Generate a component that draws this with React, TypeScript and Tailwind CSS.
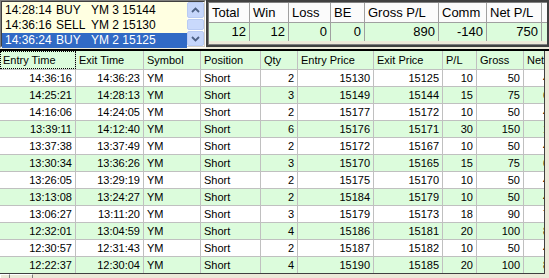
import React from "react";

const rows = [
  ["14:36:16", "14:36:23", "YM", "Short", "2", "15130", "15125", "10", "50", "42"],
  ["14:25:21", "14:28:13", "YM", "Short", "3", "15149", "15144", "15", "75", "63"],
  ["14:16:06", "14:24:05", "YM", "Short", "2", "15177", "15172", "10", "50", "42"],
  ["13:39:11", "14:12:40", "YM", "Short", "6", "15176", "15171", "30", "150", "126"],
  ["13:37:38", "13:37:49", "YM", "Short", "2", "15172", "15167", "10", "50", "42"],
  ["13:30:34", "13:36:26", "YM", "Short", "3", "15170", "15165", "15", "75", "63"],
  ["13:26:05", "13:29:19", "YM", "Short", "2", "15175", "15170", "10", "50", "42"],
  ["13:13:08", "13:24:27", "YM", "Short", "2", "15184", "15179", "10", "50", "42"],
  ["13:06:27", "13:11:20", "YM", "Short", "3", "15179", "15173", "18", "90", "78"],
  ["12:32:01", "13:04:59", "YM", "Short", "4", "15186", "15181", "20", "100", "84"],
  ["12:30:57", "12:31:43", "YM", "Short", "2", "15187", "15182", "10", "50", "42"],
  ["12:22:37", "12:30:04", "YM", "Short", "4", "15190", "15185", "20", "100", "84"],
];

const headers = ["Entry Time", "Exit Time", "Symbol", "Position", "Qty", "Entry Price", "Exit Price", "P/L", "Gross", "Net"];
const widths = [76, 68, 57, 60, 37, 76, 69, 34, 47, 60];
const rightAlign = [true, true, false, false, true, true, true, true, true, false];

const summaryHead = ["Total", "Win", "Loss", "BE", "Gross P/L", "Comm", "Net P/L"];
const summaryVals = ["12", "12", "0", "0", "890", "-140", "750"];
const summaryW = [41, 39, 42, 34, 74, 48, 55];

const listItems = [
  ["14:28:14", "BUY", "YM 3 15144"],
  ["14:36:16", "SELL", "YM 2 15130"],
  ["14:36:24", "BUY", "YM 2 15125"],
];

function Chevron({ up }: { up: boolean }) {
  return (
    <svg width="9" height="6" viewBox="0 0 9 6">
      <path
        d={up ? "M1 5 L4.5 1.5 L8 5" : "M1 1 L4.5 4.5 L8 1"}
        fill="none"
        stroke="#4d6185"
        strokeWidth="1.8"
      />
    </svg>
  );
}

export default function App() {
  return (
    <div className="w-[549px] h-[278px] bg-[#ece9d8] overflow-hidden font-['Liberation_Sans',Arial,sans-serif] text-black">
      {/* top area */}
      <div className="flex h-[49px]">
        {/* listbox */}
        <div className="w-[206px] h-[48px] border border-t-[#808080] border-l-[#808080] border-b-white border-r-white">
          <div className="w-full h-full border border-t-[#404040] border-l-[#404040] border-b-[#d4d0c8] border-r-[#d4d0c8] bg-[#ffffe1] flex">
            <div className="flex-1 pt-[1px] text-[12px] leading-[15px]">
              {listItems.map((it, i) => (
                <div
                  key={i}
                  className={
                    "flex h-[15px] pl-[3px] " +
                    (i === 2 ? "bg-[#316ac5] text-white" : "")
                  }
                >
                  <span className="w-[51px]">{it[0]}</span>
                  <span className="w-[35px]">{it[1]}</span>
                  <span>{it[2]}</span>
                </div>
              ))}
            </div>
            <div className="w-[17px] flex flex-col bg-[#fdfdfa]">
              <div className="h-[16px] rounded-[2px] border border-[#b9cbf3] bg-[#c6d6fb] flex items-center justify-center">
                <Chevron up />
              </div>
              <div className="flex-1 my-[1px] rounded-[2px] border border-[#b9cbf3] bg-[#c9d9fc]" />
              <div className="h-[15px] rounded-[2px] border border-[#b9cbf3] bg-[#c6d6fb] flex items-center justify-center">
                <Chevron up={false} />
              </div>
            </div>
          </div>
        </div>
        {/* summary grid */}
        <div className="w-[343px] h-[47px] border-2 border-[#404040] bg-[#ece9d8]">
          <div className="border border-[#808080] border-r-0 h-full">
            <div className="flex h-[20px] bg-[#fbfbfb] border-b border-[#a0a0a0] text-[13px] leading-[19px]">
              {summaryHead.map((h, i) => (
                <div
                  key={i}
                  style={{ width: summaryW[i] }}
                  className="border-r border-[#a0a0a0] pl-[3px] whitespace-nowrap overflow-hidden"
                >
                  {h}
                </div>
              ))}
            </div>
            <div className="flex h-[18px] bg-[#dcfcdc] text-[13px] leading-[18px]">
              {summaryVals.map((v, i) => (
                <div
                  key={i}
                  style={{ width: summaryW[i] }}
                  className="border-r border-[#a0a0a0] pr-[3px] text-right whitespace-nowrap"
                >
                  {v}
                </div>
              ))}
            </div>
          </div>
        </div>
      </div>
      {/* splitter line */}
      <div className="h-[2px] bg-black" />
      {/* main table */}
      <div className="flex">
        <div className="w-[545px] h-[223px] overflow-hidden bg-white border-r border-b border-[#404040]">
          <div className="flex h-[19px] bg-[#dcfcdc] border-b border-[#c0c0c0] text-[11px] leading-[18px] w-max">
            {headers.map((h, i) => (
              <div
                key={i}
                style={{ width: widths[i] }}
                className={
                  "border-r border-[#c0c0c0] pl-[3px] whitespace-nowrap overflow-hidden " +
                  (i === 0 ? "outline-1 outline-dotted outline-black -outline-offset-1" : "")
                }
              >
                {h}
              </div>
            ))}
          </div>
          {rows.map((r, ri) => (
            <div
              key={ri}
              className={
                "flex h-[17px] border-b border-[#c0c0c0] text-[11px] leading-[16px] w-max " +
                (ri % 2 === 1 ? "bg-[#dcfcdc]" : "bg-white")
              }
            >
              {r.map((c, ci) => (
                <div
                  key={ci}
                  style={{ width: widths[ci] }}
                  className={
                    "border-r border-[#c0c0c0] whitespace-nowrap overflow-hidden " +
                    (ci === 9 ? "pl-[19px]" : rightAlign[ci] ? "text-right pr-[3px]" : "pl-[3px]")
                  }
                >
                  {c}
                </div>
              ))}
            </div>
          ))}
        </div>
      </div>
      {/* bottom strip */}
      <div className="flex h-[6px]">
        <div className="w-[10px] border-l border-t border-white border-r border-r-[#808080]" />
        <div className="w-[23px] border-t border-white border-r border-r-[#808080]" />
      </div>
    </div>
  );
}
